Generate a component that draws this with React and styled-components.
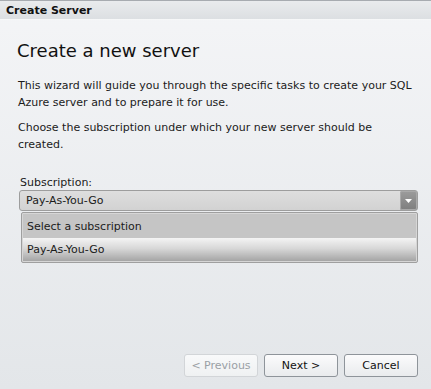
import React from 'react'
import styled, { createGlobalStyle } from 'styled-components'

const Global = createGlobalStyle`
  html, body { margin: 0; padding: 0; }
  body {
    width: 431px;
    height: 389px;
    overflow: hidden;
    font-family: "DejaVu Sans", Verdana, sans-serif;
    color: #1b1b1b;
  }
`

const Window = styled.div`
  width: 431px;
  height: 389px;
  display: flex;
  flex-direction: column;
  box-sizing: border-box;
  border-top: 1px solid #a7abb0;
  background: linear-gradient(#f4f5f7, #e3e6e9);
`

const TitleBar = styled.div`
  height: 18px;
  flex: none;
  display: flex;
  align-items: center;
  padding-left: 6px;
  font-size: 11px;
  font-weight: bold;
  color: #111;
  background: linear-gradient(#e9ebed, #dcdfe2);
  border-bottom: 1px solid #f6f7f8;
`

const Body = styled.div`
  flex: 1;
  display: flex;
  flex-direction: column;
  padding: 19px 13px 12px 18px;
`

const Heading = styled.h1`
  margin: 0 0 0 -1px;
  font-size: 18px;
  font-weight: normal;
  line-height: 24px;
  color: #111;
`

const Para = styled.p`
  margin: ${p => p.$top}px 0 0 0;
  font-size: 11px;
  line-height: 17px;
  width: 400px;
`

const Field = styled.div`
  margin-top: 23px;
  padding-left: 2px;
  display: flex;
  flex-direction: column;
`

const Label = styled.div`
  font-size: 11px;
  line-height: 13px;
  margin-bottom: 1px;
`

const Combo = styled.div`
  height: 21px;
  box-sizing: border-box;
  margin-left: -1px;
  border: 1px solid #9d9d9d;
  border-radius: 3px;
  background: linear-gradient(#dedede, #d2d2d2);
  display: flex;
  align-items: center;
  justify-content: space-between;
  padding-left: 6px;
  font-size: 11px;
`

const Arrow = styled.div`
  width: 17px;
  height: 19px;
  border-radius: 2px;
  box-shadow: inset 0 0 0 1px #a9a9a9;
  background: linear-gradient(#9c9c9c, #7e7e7e);
  display: flex;
  align-items: center;
  justify-content: center;
`

const List = styled.div`
  margin-top: 1px;
  margin-left: 1px;
  border: 1px solid #9f9f9f;
  border-radius: 2px;
  padding: 1px;
  display: flex;
  flex-direction: column;
  background: #d6d6d6;
`

const Item = styled.div`
  height: ${p => p.$h}px;
  display: flex;
  align-items: center;
  padding-left: 4px;
  font-size: 11px;
  background: ${p => p.$selected
    ? 'linear-gradient(#f4f4f4, #d8d8d8 45%, #a5a5a5)'
    : '#c5c5c5'};
`

const Footer = styled.div`
  margin-top: auto;
  display: flex;
  justify-content: flex-end;
  gap: 6px;
`

const Button = styled.button`
  width: 74px;
  height: 23px;
  box-sizing: border-box;
  border: 1px solid ${p => p.disabled ? '#d2d5d8' : '#8e949a'};
  border-radius: 3px;
  background: ${p => p.disabled
    ? 'linear-gradient(#f8f9fa, #eff1f2)'
    : 'linear-gradient(#fbfbfc, #e9ebed)'};
  color: ${p => p.disabled ? '#9aa0a5' : '#111'};
  font-family: "DejaVu Sans", Verdana, sans-serif;
  font-size: 11px;
  padding: 0;
`

export default function App() {
  return (
    <>
      <Global />
      <Window>
        <TitleBar>Create Server</TitleBar>
        <Body>
          <Heading>Create a new server</Heading>
          <Para $top={14}>This wizard will guide you through the specific tasks to create your SQL Azure server and to prepare it for use.</Para>
          <Para $top={8}>Choose the subscription under which your new server should be created.</Para>
          <Field>
            <Label>Subscription:</Label>
            <Combo>
              Pay-As-You-Go
              <Arrow>
                <svg width="7" height="4" viewBox="0 0 7 4">
                  <path d="M0 0 H7 L3.5 4 Z" fill="#fff" />
                </svg>
              </Arrow>
            </Combo>
            <List>
              <Item $h={24}>Select a subscription</Item>
              <Item $h={23} $selected>Pay-As-You-Go</Item>
            </List>
          </Field>
          <Footer>
            <Button disabled>&lt; Previous</Button>
            <Button>Next &gt;</Button>
            <Button>Cancel</Button>
          </Footer>
        </Body>
      </Window>
    </>
  )
}
